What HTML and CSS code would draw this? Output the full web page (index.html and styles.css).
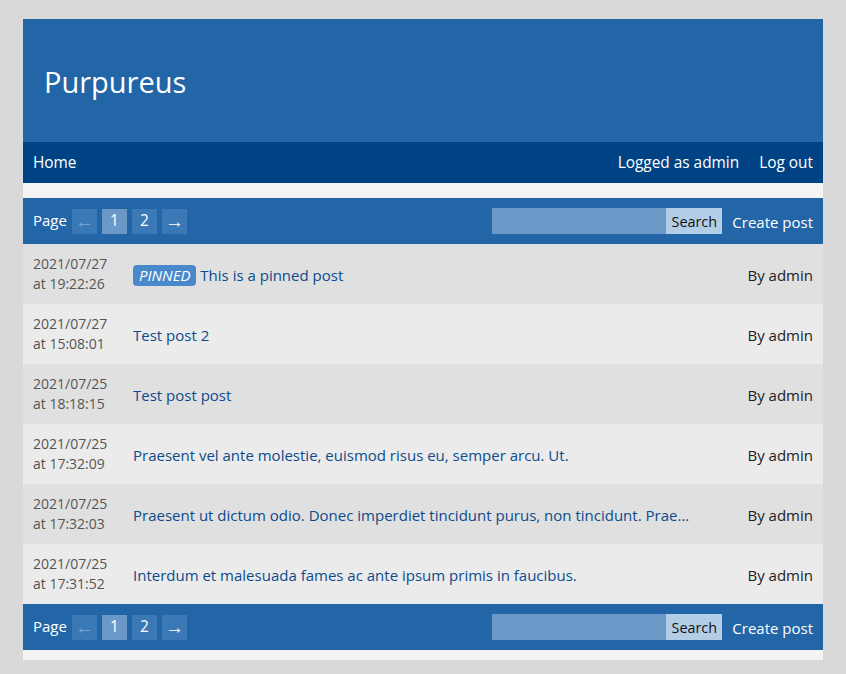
FILE: index.html
```html
<!DOCTYPE html>
<html lang="en">
<head>
<meta charset="utf-8">
<title>Purpureus</title>
<link rel="stylesheet" href="styles.css">
</head>
<body>
<div class="page">
  <header class="header">
    <h1 class="site-title">Purpureus</h1>
  </header>
  <nav class="nav">
    <a class="nav-link" href="#">Home</a>
    <div class="nav-right">
      <span class="nav-link">Logged as admin</span>
      <a class="nav-link" href="#">Log out</a>
    </div>
  </nav>
  <div class="spacer"></div>
  <div class="toolbar">
    <div class="pager">
      <span class="pager-label">Page</span>
      <span class="pbtn arrow disabled">←</span>
      <span class="pbtn active">1</span>
      <a class="pbtn" href="#">2</a>
      <a class="pbtn arrow" href="#">→</a>
    </div>
    <div class="tools">
      <form class="search">
        <input class="search-input" type="text">
        <button class="search-btn" type="button">Search</button>
      </form>
      <a class="create" href="#">Create post</a>
    </div>
  </div>
  <div class="posts">
    <div class="post">
      <div class="date">2021/07/27<br>at 19:22:26</div>
      <div class="title"><span class="badge">PINNED</span> <a href="#">This is a pinned post</a></div>
      <div class="author">By admin</div>
    </div>
    <div class="post">
      <div class="date">2021/07/27<br>at 15:08:01</div>
      <div class="title"><a href="#">Test post 2</a></div>
      <div class="author">By admin</div>
    </div>
    <div class="post">
      <div class="date">2021/07/25<br>at 18:18:15</div>
      <div class="title"><a href="#">Test post post</a></div>
      <div class="author">By admin</div>
    </div>
    <div class="post">
      <div class="date">2021/07/25<br>at 17:32:09</div>
      <div class="title"><a href="#">Praesent vel ante molestie, euismod risus eu, semper arcu. Ut.</a></div>
      <div class="author">By admin</div>
    </div>
    <div class="post">
      <div class="date">2021/07/25<br>at 17:32:03</div>
      <div class="title"><a href="#">Praesent ut dictum odio. Donec imperdiet tincidunt purus, non tincidunt. Prae…</a></div>
      <div class="author">By admin</div>
    </div>
    <div class="post">
      <div class="date">2021/07/25<br>at 17:31:52</div>
      <div class="title"><a href="#">Interdum et malesuada fames ac ante ipsum primis in faucibus.</a></div>
      <div class="author">By admin</div>
    </div>
  </div>
  <div class="toolbar">
    <div class="pager">
      <span class="pager-label">Page</span>
      <span class="pbtn arrow disabled">←</span>
      <span class="pbtn active">1</span>
      <a class="pbtn" href="#">2</a>
      <a class="pbtn arrow" href="#">→</a>
    </div>
    <div class="tools">
      <form class="search">
        <input class="search-input" type="text">
        <button class="search-btn" type="button">Search</button>
      </form>
      <a class="create" href="#">Create post</a>
    </div>
  </div>
  <div class="footer-strip"></div>
</div>
</body>
</html>
```

FILE: styles.css
```css
html, body {
  margin: 0;
  padding: 0;
  background: #d9d9d9;
}
body {
  font-family: "Open Sans", "Noto Sans", sans-serif;
  font-size: 15px;
  color: #222;
  padding: 19px 23px 0;
}
a { text-decoration: none; color: inherit; }
.page {
  width: 800px;
  background: #f4f4f4;
}
.header {
  background: #2266a8;
  height: 123px;
  display: flex;
  align-items: center;
  padding: 0 21px;
  box-sizing: border-box;
}
.site-title {
  margin: 0;
  font-weight: 400;
  font-size: 29px;
  color: #fff;
  line-height: 1;
  position: relative;
  top: 1px;
}
.nav {
  background: #004385;
  height: 41px;
  display: flex;
  align-items: center;
  justify-content: space-between;
  padding: 0 10px;
}
.nav-right {
  display: flex;
  gap: 20px;
}
.nav-link {
  color: #fff;
  font-size: 15.4px;
}
.spacer {
  height: 15px;
}
.toolbar {
  background: #2266a8;
  height: 46px;
  display: flex;
  align-items: center;
  justify-content: space-between;
  padding: 0 10px;
  color: #fff;
}
.pager {
  display: flex;
  align-items: center;
  gap: 5px;
}
.pager-label {
  font-size: 15px;
  position: relative;
  top: -1px;
}
.pbtn {
  width: 25px;
  height: 25px;
  display: flex;
  align-items: center;
  justify-content: center;
  background: #3a79b6;
  color: #fff;
  font-size: 15.4px;
  line-height: 1;
}
.pbtn.arrow {
  font-size: 19px;
}
.pbtn.disabled {
  color: #7fa6cf;
}
.pbtn.active {
  background: #6b98c6;
}
.tools {
  display: flex;
  align-items: center;
  gap: 10px;
}
.search {
  display: flex;
  margin: 0;
}
.search-input {
  width: 174px;
  height: 26px;
  box-sizing: border-box;
  border: none;
  margin: 0;
  padding: 0 6px;
  background: #6b98c6;
  outline: none;
}
.search-btn {
  height: 26px;
  width: 56px;
  border: none;
  margin: 0;
  padding: 0;
  background: #b4cde6;
  color: #111;
  font-family: inherit;
  font-size: 14.4px;
}
.create {
  color: #fff;
  font-size: 15px;
  position: relative;
  top: 1px;
}
.post {
  height: 60px;
  display: flex;
  align-items: center;
  padding: 0 10px;
  background: #e0e0e0;
}
.post:nth-child(even) {
  background: #ebebeb;
}
.date {
  width: 100px;
  flex: none;
  font-size: 14px;
  line-height: 20px;
  color: #555;
}
.title {
  flex: 1;
  min-width: 0;
  white-space: nowrap;
  overflow: hidden;
  font-size: 15px;
  color: #0d4b8c;
  position: relative;
  top: 1px;
}
.title a { color: #0d4b8c; }
.badge {
  display: inline-block;
  background: #4a88cc;
  color: #fff;
  font-style: italic;
  border-radius: 4px;
  padding: 0 6px 0 6px;
  line-height: 21px;
  font-size: 15px;
}
.author {
  flex: none;
  font-size: 15px;
  color: #222;
  margin-left: 20px;
  position: relative;
  top: 1px;
}
.footer-strip {
  height: 10px;
}
```
